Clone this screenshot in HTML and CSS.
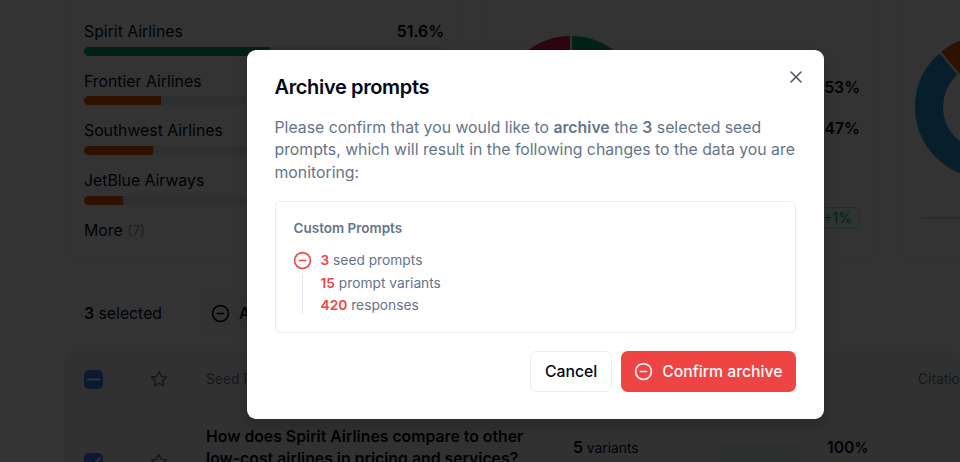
FILE: index.html
```html
<!DOCTYPE html>
<html lang="en">
<head>
    <meta charset="UTF-8">
    <meta name="viewport" content="width=device-width, initial-scale=1.0">
    <title>Archive prompts</title>
    <link rel="stylesheet" href="styles.css">
</head>
<body>

<!-- Shared icons -->
<svg class="sprite" width="0" height="0">
    <symbol id="circle-minus" viewBox="0 0 24 24">
        <circle cx="12" cy="12" r="10"></circle>
        <path d="M8 12h8"></path>
    </symbol>
    <symbol id="star" viewBox="0 0 24 24">
        <path d="M12 2l3.09 6.26L22 9.27l-5 4.87 1.18 6.88L12 17.77l-6.18 3.25L7 14.14 2 9.27l6.91-1.01z"></path>
    </symbol>
</svg>

<main class="page">
    <div class="cards">
        <section class="card ranking">
            <div class="brand">
                <div class="brand-label"><span>Spirit Airlines</span><b>51.6%</b></div>
                <div class="bar"><div class="fill green" style="width: 51.6%"></div></div>
            </div>
            <div class="brand">
                <div class="brand-label"><span>Frontier Airlines</span></div>
                <div class="bar"><div class="fill" style="width: 21.3%"></div></div>
            </div>
            <div class="brand">
                <div class="brand-label"><span>Southwest Airlines</span></div>
                <div class="bar"><div class="fill" style="width: 19.2%"></div></div>
            </div>
            <div class="brand">
                <div class="brand-label"><span>JetBlue Airways</span></div>
                <div class="bar"><div class="fill" style="width: 10.8%"></div></div>
            </div>
            <div class="more">More <small>(7)</small></div>
        </section>

        <section class="card sentiment">
            <svg class="donut" viewBox="0 0 142 142">
                <circle cx="71" cy="71" r="57" stroke="#10a870" pathLength="100" stroke-dasharray="53 47" transform="rotate(-90 71 71)"></circle>
                <circle cx="71" cy="71" r="57" stroke="#e11d48" pathLength="100" stroke-dasharray="47 53" stroke-dashoffset="-53" transform="rotate(-90 71 71)"></circle>
                <path d="M71 0v30"></path>
            </svg>
            <div class="stats">
                <b>53%</b>
                <b>47%</b>
                <span class="badge">+1%</span>
            </div>
        </section>

        <section class="card sources">
            <svg class="donut" viewBox="0 0 142 142">
                <circle cx="71" cy="71" r="57" stroke="#1e9bd7"></circle>
                <circle cx="71" cy="71" r="57" stroke="#ea580c" pathLength="100" stroke-dasharray="25 75" transform="rotate(-130 71 71)"></circle>
                <path d="M24 15l21 25"></path>
            </svg>
            <div class="rule"></div>
        </section>
    </div>

    <div class="toolbar">
        <span class="selected"><b>3</b> selected</span>
        <button class="archive"><svg class="icon"><use href="#circle-minus"></use></svg>Archive</button>
    </div>

    <div class="table">
        <div class="row head">
            <span class="check"><svg viewBox="0 0 18 18"><path d="M3.5 9h11"></path></svg></span>
            <svg class="star"><use href="#star"></use></svg>
            <span>Seed Prompt</span>
            <span></span>
            <span></span>
            <span></span>
            <span>Citations</span>
        </div>
        <div class="row">
            <span class="check"><svg viewBox="0 0 18 18"><path d="M3 9l4 4 8-8"></path></svg></span>
            <svg class="star"><use href="#star"></use></svg>
            <strong>How does Spirit Airlines compare to other low-cost airlines in pricing and services?</strong>
            <span class="variants"><b>5</b> variants</span>
            <span class="spark"></span>
            <span class="score">100<small>%</small></span>
        </div>
    </div>
</main>

<div class="overlay">
    <div class="dialog" role="dialog">
        <button class="close" aria-label="Close">
            <svg viewBox="0 0 12 12"><path d="M1 1l10 10M11 1L1 11"></path></svg>
        </button>
        <h2>Archive prompts</h2>
        <p class="description">Please confirm that you would like to <b>archive</b> the <b>3</b> selected seed prompts, which will result in the following changes to the data you are monitoring:</p>

        <div class="summary">
            <h3>Custom Prompts</h3>
            <div class="changes">
                <div class="marker">
                    <svg class="icon"><use href="#circle-minus"></use></svg>
                    <div class="line"></div>
                </div>
                <ul>
                    <li><b>3</b> seed prompts</li>
                    <li><b>15</b> prompt variants</li>
                    <li><b>420</b> responses</li>
                </ul>
            </div>
        </div>

        <div class="actions">
            <button class="btn cancel">Cancel</button>
            <button class="btn confirm"><svg class="icon"><use href="#circle-minus"></use></svg>Confirm archive</button>
        </div>
    </div>
</div>

</body>
</html>
```
FILE: styles.css
```css
* {
    box-sizing: border-box;
}
body {
    margin: 0;
    height: 462px;
    overflow: hidden;
    position: relative;
    font-family: Inter, sans-serif;
    font-size: 15.8px;
    color: #020817;
    background: #fff;
}
button {
    font-family: inherit;
    font-size: 15.8px;
    font-weight: 500;
    cursor: pointer;
}
b, strong {
    font-weight: 600;
}
svg {
    display: block;
    fill: none;
    stroke: currentColor;
    stroke-width: 2;
    stroke-linecap: round;
    stroke-linejoin: round;
}
.sprite {
    position: absolute;
}
.icon {
    width: 19px;
    height: 19px;
    flex: none;
}

/* Page behind the dialog */
.page {
    width: 960px;
    height: 462px;
    overflow: hidden;
    padding-left: 65px;
}
.cards {
    display: flex;
    gap: 18px;
    height: 257px;
}
.card {
    width: 398px;
    flex: none;
    border: 1px solid #e9eef5;
    border-top: 0;
    border-radius: 0 0 9px 9px;
}
.ranking {
    padding: 21px 18px 0;
}
.brand {
    height: 49.7px;
}
.brand-label {
    display: flex;
    justify-content: space-between;
    line-height: 22px;
    margin-bottom: 3.5px;
}
.bar {
    height: 9px;
    border-radius: 5px;
    background: #e2e8f0;
    overflow: hidden;
}
.fill {
    height: 9px;
    background: #ea580c;
}
.fill.green {
    background: #10a870;
}
.more {
    line-height: 22px;
}
.more small {
    font-size: 14px;
    color: #94a3b8;
}
.donut {
    width: 142px;
    height: 142px;
    stroke-width: 28;
    stroke-linecap: butt;
    flex: none;
}
.donut path {
    stroke: #fff;
    stroke-width: 2;
}
.sentiment {
    display: flex;
    justify-content: space-between;
    padding: 35.5px 18px 0 18px;
}
.stats {
    display: flex;
    flex-direction: column;
    align-items: flex-end;
    padding-top: 41.5px;
}
.stats b {
    line-height: 22px;
    margin-bottom: 19px;
}
.badge {
    margin-top: 48px;
    padding: 0 7px;
    line-height: 20px;
    font-size: 14px;
    color: #10b981;
    background: #ecfdf5;
    border: 1px solid #a7f3d0;
    border-radius: 6px;
}
.sources {
    padding: 36px 18px 0 17px;
}
.rule {
    height: 2px;
    margin: 39px 0 0 6px;
    background: #cbd5e1;
}
.toolbar {
    display: flex;
    align-items: center;
    gap: 38px;
    height: 94px;
    padding: 18px 0 0 19px;
}
.archive {
    display: flex;
    align-items: center;
    gap: 9px;
    height: 40px;
    padding: 0 11px;
    border: 0;
    border-radius: 7px;
    background: #f8fafc;
    color: #020817;
}
.table {
    border: 1px solid #e9eef5;
    border-radius: 9px 9px 0 0;
    background: #f5f6fb;
    overflow: hidden;
}
.row {
    display: grid;
    grid-template-columns: 66px 56px 367px 148px 106px 91px 120px;
    align-items: center;
    height: 110px;
    padding-left: 18px;
}
.row.head {
    height: 55px;
    border-bottom: 1px solid #e9eef5;
    font-size: 13.8px;
    color: #64748b;
}
.row strong {
    width: 340px;
    line-height: 22px;
    align-self: start;
    margin-top: 19px;
}
.check {
    width: 19px;
    height: 19px;
    border-radius: 5px;
    background: #3b82f6;
    color: #fff;
}
.check svg {
    width: 19px;
    height: 19px;
}
.star {
    width: 18px;
    height: 18px;
    color: #64748b;
}
.variants {
    font-size: 13.8px;
    align-self: start;
    margin-top: 31px;
}
.variants b {
    font-size: 15.8px;
}
.spark {
    width: 79px;
    height: 40px;
    margin-top: 38px;
    background: #e4edf0;
    align-self: start;
}
.score {
    font-weight: 600;
    align-self: start;
    margin-top: 31px;
}
.score small {
    font-size: 13.8px;
}

/* Dialog */
.overlay {
    position: absolute;
    top: 0;
    left: 0;
    width: 960px;
    height: 462px;
    padding: 49.5px 0 0 247px;
    background: rgba(0, 0, 0, 0.8);
}
.dialog {
    position: relative;
    width: 576.5px;
    height: 369px;
    padding: 23px 27.5px;
    border-radius: 9px;
    background: #fff;
    box-shadow: 0 8px 14px rgba(0, 0, 0, 0.15);
}
.close {
    position: absolute;
    top: 21.5px;
    right: 21.5px;
    padding: 0;
    border: 0;
    background: none;
    color: #4b5160;
}
.close svg {
    width: 12px;
    height: 12px;
    stroke-width: 1.5;
}
h2 {
    margin: 0 0 15px;
    font-size: 20px;
    font-weight: 600;
    line-height: 29px;
    letter-spacing: -0.36px;
}
.description {
    margin: 0;
    line-height: 22.5px;
    color: #64748b;
}
.summary {
    height: 132px;
    margin: 16.5px 0 18px;
    padding: 16.5px 18px;
    border: 1px solid #e8edf4;
    border-radius: 5px;
    font-size: 13.75px;
    color: #64748b;
}
h3 {
    margin: 0 0 11px;
    font-size: 13.5px;
    font-weight: 600;
    line-height: 20px;
}
.changes {
    display: flex;
    gap: 9px;
}
.marker {
    display: flex;
    flex-direction: column;
    align-items: center;
    margin-left: -1px;
    padding-top: 2px;
    color: #ef4444;
}
.line {
    width: 1px;
    height: 40px;
    margin-top: 4px;
    background: #e2e8f0;
}
ul {
    list-style: none;
    margin: 0;
    padding: 0;
}
li {
    line-height: 22.5px;
}
li b {
    color: #ef4444;
}
.actions {
    display: flex;
    justify-content: flex-end;
    gap: 9px;
}
.btn {
    display: flex;
    align-items: center;
    gap: 9px;
    height: 41px;
    padding: 0 13.5px;
    border-radius: 7px;
    border: 0;
    font-size: 15.75px;
}
.cancel {
    border: 1px solid #e8edf4;
    background: #fff;
    color: #020817;
}
.confirm {
    background: #ef4444;
    color: #f8fafc;
}
```
